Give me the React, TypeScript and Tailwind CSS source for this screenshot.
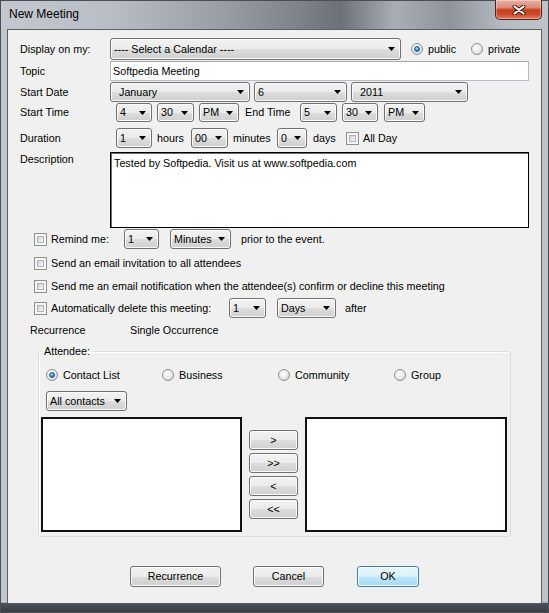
import React from 'react';

const face = "font-['Liberation_Sans',Arial,sans-serif]";
const glossy =
  'bg-[linear-gradient(180deg,#f2f2f2_0%,#ebebeb_50%,#dddddd_50%,#cfcfcf_100%)] shadow-[inset_0_0_0_1px_#fbfbfb]';

function Arrow() {
  return (
    <svg width="7" height="4" viewBox="0 0 7 4" className="shrink-0">
      <path d="M0 0H7L3.5 4Z" fill="#000" />
    </svg>
  );
}

function Combo({ text, className = '', pad = 'pl-[3px]' }: { text: string; className?: string; pad?: string }) {
  return (
    <div
      className={`flex items-center justify-between shrink-0 rounded-[3px] border border-[#707070] pr-[5px] ${glossy} ${pad} ${className}`}
    >
      <span className="leading-[13px] whitespace-nowrap">{text}</span>
      <Arrow />
    </div>
  );
}

function Check() {
  return (
    <span className="flex w-[13px] h-[13px] shrink-0 border border-[#8e8f8f] bg-[#f6f6f6] p-[2px]">
      <span className="flex-1 border border-[#b0b4b9] bg-[linear-gradient(135deg,#c9cdd2_0%,#e4e6e9_55%,#f8f8f8_100%)]" />
    </span>
  );
}

function Radio({ on = false }: { on?: boolean }) {
  return (
    <span className="flex w-[12px] h-[12px] shrink-0 items-center justify-center rounded-full border border-[#8e8f8f] bg-[radial-gradient(circle_at_40%_35%,#ffffff_0%,#e8e8e8_55%,#cdcdcd_100%)]">
      {on && (
        <span className="w-[6px] h-[6px] rounded-full border border-[#1d5a8e] bg-[radial-gradient(circle_at_40%_35%,#b6e3ff_0%,#3f97d6_50%,#12528f_100%)]" />
      )}
    </span>
  );
}

function Btn({ text, className = '' }: { text: string; className?: string }) {
  return (
    <div
      className={`flex items-center justify-center shrink-0 rounded-[3px] border border-[#707070] leading-[13px] ${glossy} ${className}`}
    >
      {text}
    </div>
  );
}

function CloseButton() {
  return (
    <div className="flex items-center justify-center w-[47px] h-[20px] -mt-[1px] rounded-b-[5px] border border-t-0 border-[#5a1f15] bg-[linear-gradient(180deg,#eab1a4_0%,#dc8a77_40%,#c5411f_52%,#cc4b2c_75%,#e27a5a_100%)] shadow-[inset_0_0_0_1px_rgba(255,255,255,0.35)]">
      <svg width="14" height="10" viewBox="0 0 14 10">
        <path d="M2.5 1.5L11.5 8.5M11.5 1.5L2.5 8.5" stroke="#3b1008" strokeWidth="4" strokeLinecap="round" />
        <path d="M2.5 1.5L11.5 8.5M11.5 1.5L2.5 8.5" stroke="#fff" strokeWidth="2.2" strokeLinecap="round" />
      </svg>
    </div>
  );
}

export default function App() {
  return (
    <div
      className={`flex flex-col w-[549px] h-[613px] border border-[#4a4e55] px-[6px] pb-[8px] text-[10.75px] text-black ${face} bg-[linear-gradient(180deg,transparent_0%,transparent_98.4%,#4c5159_98.6%,#383c43_100%),linear-gradient(90deg,#c3c7ce_0%,#b9bdc5_20%,#9a9ea7_40%,#7d818a_55%,#6c7079_62%,#a9adb5_72%,#8f939b_82%,#b6bac1_92%,#c0c4ca_100%)]`}
    >
      {/* title bar */}
      <div className="flex items-start justify-between h-[28px] shrink-0">
        <span className="pl-[2px] pt-[6px] text-[12px] leading-[15px]">New Meeting</span>
        <CloseButton />
      </div>

      {/* client area */}
      <div className="flex flex-col flex-1 border border-[#5b5f66] bg-[#f0f0f0] pl-[12px]">
        <div className="flex items-center mt-[8px] h-[22px]">
          <span className="w-[90px] shrink-0">Display on my:</span>
          <Combo text="---- Select a Calendar ----" className="w-[291px] h-[22px]" />
          <div className="flex items-center ml-[10px] w-[60px]">
            <Radio on />
            <span className="ml-[5px]">public</span>
          </div>
          <div className="flex items-center">
            <Radio />
            <span className="ml-[5px]">private</span>
          </div>
        </div>

        <div className="flex items-center mt-[1px] h-[20px]">
          <span className="w-[90px] shrink-0">Topic</span>
          <div className="flex items-center w-[419px] h-[20px] border border-[#b9bcc1] border-t-[#a5a8ae] bg-white pl-[2px]">
            Softpedia Meeting
          </div>
        </div>

        <div className="flex items-center mt-[1px] h-[20px]">
          <span className="w-[90px] shrink-0">Start Date</span>
          <Combo text="January" className="w-[140px] h-[20px]" pad="pl-[8px]" />
          <Combo text="6" className="ml-[4px] w-[93px] h-[20px]" />
          <Combo text="2011" className="ml-[4px] w-[117px] h-[20px]" pad="pl-[8px]" />
        </div>

        <div className="flex items-center mt-[1px] h-[19px]">
          <span className="w-[96px] shrink-0">Start Time</span>
          <Combo text="4" className="w-[36px] h-[19px]" />
          <Combo text="30" className="ml-[5px] w-[37px] h-[19px]" />
          <Combo text="PM" className="ml-[5px] w-[40px] h-[19px]" />
          <span className="ml-[6px] w-[55px] shrink-0">End Time</span>
          <Combo text="5" className="w-[37px] h-[19px]" />
          <Combo text="30" className="ml-[5px] w-[36px] h-[19px]" />
          <Combo text="PM" className="ml-[6px] w-[41px] h-[19px]" />
        </div>

        <div className="flex items-center mt-[6px] h-[20px]">
          <span className="w-[96px] shrink-0">Duration</span>
          <Combo text="1" className="w-[36px] h-[20px]" />
          <span className="ml-[5px] w-[34px] shrink-0">hours</span>
          <Combo text="00" className="w-[37px] h-[20px]" />
          <span className="ml-[5px] w-[44px] shrink-0">minutes</span>
          <Combo text="0" className="w-[30px] h-[20px]" />
          <span className="ml-[6px] w-[33px] shrink-0">days</span>
          <Check />
          <span className="ml-[4px]">All Day</span>
        </div>

        <div className="flex items-start mt-[4px]">
          <span className="w-[90px] shrink-0 pt-[1px] leading-[13px]">Description</span>
          <div className="w-[419px] h-[76px] border border-black bg-white pl-[3px] pt-[4px] leading-[13px] shadow-[inset_1px_1px_0_#6b6b6b]">
            Tested by Softpedia. Visit us at www.softpedia.com
          </div>
        </div>

        <div className="flex items-center mt-[1px] h-[20px] ml-[14px]">
          <Check />
          <span className="ml-[4px] w-[73px] shrink-0">Remind me:</span>
          <Combo text="1" className="w-[35px] h-[20px]" />
          <Combo text="Minutes" className="ml-[11px] w-[61px] h-[20px]" />
          <span className="ml-[10px]">prior to the event.</span>
        </div>

        <div className="flex items-center mt-[4px] h-[20px] ml-[14px]">
          <Check />
          <span className="ml-[4px]">Send an email invitation to all attendees</span>
        </div>

        <div className="flex items-center mt-[3px] h-[20px] ml-[14px]">
          <Check />
          <span className="ml-[4px]">
            Send me an email notification when the attendee(s) confirm or decline this meeting
          </span>
        </div>

        <div className="flex items-center mt-[2px] h-[20px] ml-[14px]">
          <Check />
          <span className="ml-[4px] w-[178px] shrink-0">Automatically delete this meeting:</span>
          <Combo text="1" className="w-[37px] h-[20px]" />
          <Combo text="Days" className="ml-[11px] w-[59px] h-[20px]" />
          <span className="ml-[9px]">after</span>
        </div>

        <div className="flex items-center mt-[4px] h-[16px] ml-[10px]">
          <span className="w-[100px] shrink-0">Recurrence</span>
          <span>Single Occurrence</span>
        </div>

        <fieldset className="mt-[7px] ml-[18px] w-[473px] rounded-[3px] border border-[#d5dfe5] pl-[2px] pb-[4px] shadow-[inset_1px_1px_0_#ffffff]">
          <legend className="px-[3px] leading-[13px]">Attendee:</legend>
          <div className="flex items-center mt-[10px] h-[14px] ml-[5px]">
            {['Contact List', 'Business', 'Community', 'Group'].map((name, i) => (
              <div key={name} className="flex items-center w-[116px]">
                <Radio on={i === 0} />
                <span className="ml-[5px]">{name}</span>
              </div>
            ))}
          </div>
          <Combo text="All contacts" className="mt-[9px] ml-[5px] w-[81px] h-[20px]" />
          <div className="flex mt-[6px]">
            <div className="w-[201px] h-[115px] border-2 border-[#111] bg-white" />
            <div className="flex flex-col gap-[3px] ml-[7px] w-[49px] pt-[13px]">
              <Btn text=">" className="h-[20px]" />
              <Btn text=">>" className="h-[20px]" />
              <Btn text="<" className="h-[20px]" />
              <Btn text="<<" className="h-[20px]" />
            </div>
            <div className="ml-[7px] w-[202px] h-[115px] border-2 border-[#111] bg-white" />
          </div>
        </fieldset>

        <div className="flex mt-[29px] ml-[110px]">
          <Btn text="Recurrence" className="w-[91px] h-[21px]" />
          <Btn text="Cancel" className="ml-[32px] w-[71px] h-[21px]" />
          <div className="flex items-center justify-center ml-[33px] w-[62px] h-[21px] rounded-[3px] border border-[#3c7fb1] bg-[linear-gradient(180deg,#eaf6fd_0%,#d9f0fc_50%,#bee6fd_50%,#a7d9f5_100%)] shadow-[inset_0_0_0_1px_#f4fbff]">
            OK
          </div>
        </div>
      </div>
    </div>
  );
}
